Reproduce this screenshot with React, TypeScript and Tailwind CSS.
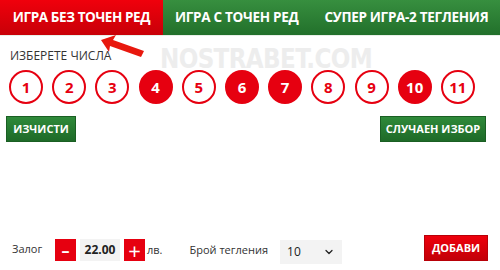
import { ChevronDown } from "lucide-react";

const numbers = [1, 2, 3, 4, 5, 6, 7, 8, 9, 10, 11];
const picked = [4, 6, 7, 10];

function Ball({ n, on }: { n: number; on: boolean }) {
    return (
        <div
            className={
                on
                    ? "w-[34px] h-[34px] rounded-full border-2 border-[#e60010] bg-[#e60010] text-white flex items-center justify-center text-[15px] font-bold"
                    : "w-[34px] h-[34px] rounded-full border-2 border-[#e60010] bg-white text-[#e60010] flex items-center justify-center text-[15px] font-bold"
            }
        >
            {n}
        </div>
    );
}

export default function App() {
    return (
        <div className="relative w-[500px] h-[270px] bg-white overflow-hidden font-['Open_Sans',sans-serif]">
            {/* Tabs */}
            <div className="flex h-[36px] border-b border-[#e8efe8] whitespace-nowrap">
                <div className="w-[163px] flex items-center justify-center bg-gradient-to-b from-[#f0000c] to-[#c80008] text-white text-[13.5px] tracking-[-0.4px] font-bold">
                    ИГРА БЕЗ ТОЧЕН РЕД
                </div>
                <div className="flex-1 flex items-center bg-gradient-to-b from-[#378f3f] to-[#22702b] text-white text-[13.5px] tracking-[-0.3px] font-bold">
                    <span className="ml-[12px]">ИГРА С ТОЧЕН РЕД</span>
                    <span className="ml-[26px]">СУПЕР ИГРА-2 ТЕГЛЕНИЯ</span>
                </div>
            </div>

            {/* Watermark */}
            <div className="absolute left-[160px] top-[39px] text-[27px] font-bold text-[#ededed] tracking-tight font-['DejaVu_Sans_Condensed','DejaVu_Sans',sans-serif] scale-x-95 origin-left">
                NOSTRABET.COM
            </div>

            {/* Arrow */}
            <svg className="absolute left-[96px] top-[34px]" width="54" height="28" viewBox="0 0 54 28">
                <path d="M5 6 L20 1 L17 6 L48 17 L45 23 L14 12 L13 18 Z" fill="#e8180e" />
            </svg>

            <div className="relative px-[10px] pt-[14px]">
                <div className="text-[12px] text-[#333] leading-none">ИЗБЕРЕТЕ ЧИСЛА</div>

                <div className="flex gap-[9.2px] mt-[8px] -ml-[1px]">
                    {numbers.map((n) => (
                        <Ball key={n} n={n} on={picked.includes(n)} />
                    ))}
                </div>

                <div className="flex justify-between mt-[12px] -ml-[4px] mr-[4px]">
                    <button className="w-[70px] h-[26px] bg-gradient-to-b from-[#2f8a3a] to-[#1e6a28] border border-[#1a5f23] text-white text-[11px] font-bold">
                        ИЗЧИСТИ
                    </button>
                    <button className="w-[106px] h-[26px] bg-gradient-to-b from-[#2f8a3a] to-[#1e6a28] border border-[#1a5f23] text-white text-[11px] font-bold">
                        СЛУЧАЕН ИЗБОР
                    </button>
                </div>
            </div>

            {/* Bottom row */}
            <div className="absolute left-0 right-0 top-[235px] flex items-center px-[12px] h-[26px]">
                <span className="text-[11px] text-[#333] w-[43px] mt-[2px]">Залог</span>
                <button className="w-[21px] h-[22px] mt-[4px] bg-[#e60010] text-white text-[16px] font-bold flex items-center justify-center leading-none">
                    –
                </button>
                <div className="w-[40px] h-[22px] mt-[4px] ml-[4px] bg-[#f3f3f3] text-[12px] font-bold text-[#222] flex items-center justify-center">
                    22.00
                </div>
                <button className="w-[21px] h-[22px] mt-[4px] ml-[4px] bg-[#e60010] text-white text-[22px] flex items-center justify-center leading-none">
                    +
                </button>
                <span className="text-[11px] text-[#333] ml-[2px] mt-[4px]">лв.</span>
                <span className="text-[11px] text-[#333] ml-[27px] mt-[4px]">Брой тегления</span>
                <div className="w-[62px] h-[24px] ml-[12px] mt-[8px] bg-[#f3f3f3] flex items-center justify-between px-[7px] text-[12px] text-[#222]">
                    <span>10</span>
                    <ChevronDown size={12} strokeWidth={2.5} />
                </div>
                <button className="ml-auto w-[64px] h-[26px] bg-gradient-to-b from-[#ee000c] to-[#c20008] border border-[#b80008] text-white text-[11px] font-bold">
                    ДОБАВИ
                </button>
            </div>
        </div>
    );
}
